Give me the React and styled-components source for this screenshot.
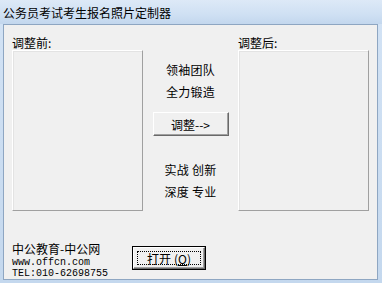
import styled, { createGlobalStyle } from "styled-components";

const Global = createGlobalStyle`
  html, body { margin: 0; padding: 0; background: #fff; }
  body { font-family: "Noto Sans CJK SC", "Liberation Sans", sans-serif; }
`;

const Window = styled.div`
  width: 382px;
  height: 283px;
  display: flex;
  flex-direction: column;
  background: linear-gradient(180deg, #d3e3f5 0%, #c4d8ee 100%);
  box-sizing: border-box;
`;

const TitleBar = styled.div`
  height: 24px;
  flex: none;
  display: flex;
  align-items: center;
  padding-left: 3px;
  font-size: 12px;
  color: #000;
  background: linear-gradient(180deg, #dde9f7 0%, #cfe0f3 60%, #c3d7ee 100%);
`;

const Client = styled.div`
  flex: 1;
  margin: 0 4px 3px 3px;
  border: 1px solid #8ea6c2;
  background: #f0f0f0;
  display: flex;
  flex-direction: column;
  padding: 10px 8px 0 8px;
`;

const TopRow = styled.div`
  display: flex;
`;

const Side = styled.div`
  width: 131px;
  display: flex;
  flex-direction: column;
`;

const Label = styled.div`
  font-size: 12px;
  line-height: 15px;
  height: 15px;
  color: #000;
`;

const Frame = styled.div`
  height: 161px;
  box-sizing: border-box;
  border: 1px solid;
  border-color: #ffffff #a0a0a0 #a0a0a0 #ffffff;
  box-shadow: inset 1px 1px 0 #e3e3e3;
`;

const Center = styled.div`
  flex: 1;
  display: flex;
  flex-direction: column;
  align-items: center;
  padding-top: 24px;
  font-size: 12px;
  color: #000;
`;

const Line = styled.div`
  line-height: 22px;
  height: 22px;
  letter-spacing: 0.3px;
`;

const Button = styled.div`
  box-sizing: border-box;
  width: ${(p) => p.$w}px;
  height: ${(p) => p.$h}px;
  display: flex;
  align-items: center;
  justify-content: center;
  font-size: 12px;
  color: #000;
  background: #f0f0f0;
  border: 1px solid;
  border-color: #ffffff #696969 #696969 #ffffff;
  box-shadow: inset -1px -1px 0 #a0a0a0;
  position: relative;
`;

const DefaultButton = styled(Button)`
  outline: 1px solid #000;
  outline-offset: 0;
  gap: 3px;
`;

const Focus = styled.span`
  position: absolute;
  inset: 3px;
  border: 1px dotted #000;
`;

const Gap = styled.div`
  height: ${(p) => p.$h}px;
`;

const BottomRow = styled.div`
  display: flex;
  align-items: flex-start;
  margin-top: 30px;
`;

const Info = styled.div`
  width: 121px;
  display: flex;
  flex-direction: column;
`;

const Brand = styled.div`
  font-size: 12px;
  line-height: 16px;
  color: #000;
`;

const Mono = styled.div`
  font-family: "Liberation Mono", "DejaVu Sans Mono", monospace;
  font-size: 10px;
  line-height: 11px;
  color: #000;
`;

const Open = styled.div`
  padding-top: 6px;
`;

const U = styled.span`
  text-decoration: underline;
`;

export default function App() {
  return (
    <>
      <Global />
      <Window>
        <TitleBar>公务员考试考生报名照片定制器</TitleBar>
        <Client>
          <TopRow>
            <Side>
              <Label>调整前:</Label>
              <Frame />
            </Side>
            <Center>
              <Line>领袖团队</Line>
              <Line>全力锻造</Line>
              <Gap $h={9} />
              <Button $w={76} $h={24}>调整--&gt;</Button>
              <Gap $h={23} />
              <Line>实战 创新</Line>
              <Line>深度 专业</Line>
            </Center>
            <Side>
              <Label>调整后:</Label>
              <Frame />
            </Side>
          </TopRow>
          <BottomRow>
            <Info>
              <Brand>中公教育-中公网</Brand>
              <Mono>www.offcn.com</Mono>
              <Mono>TEL:010-62698755</Mono>
            </Info>
            <Open>
              <DefaultButton $w={72} $h={22}>
                <Focus />
                <span>打开</span>
                <span>(<U>O</U>)</span>
              </DefaultButton>
            </Open>
          </BottomRow>
        </Client>
      </Window>
    </>
  );
}
